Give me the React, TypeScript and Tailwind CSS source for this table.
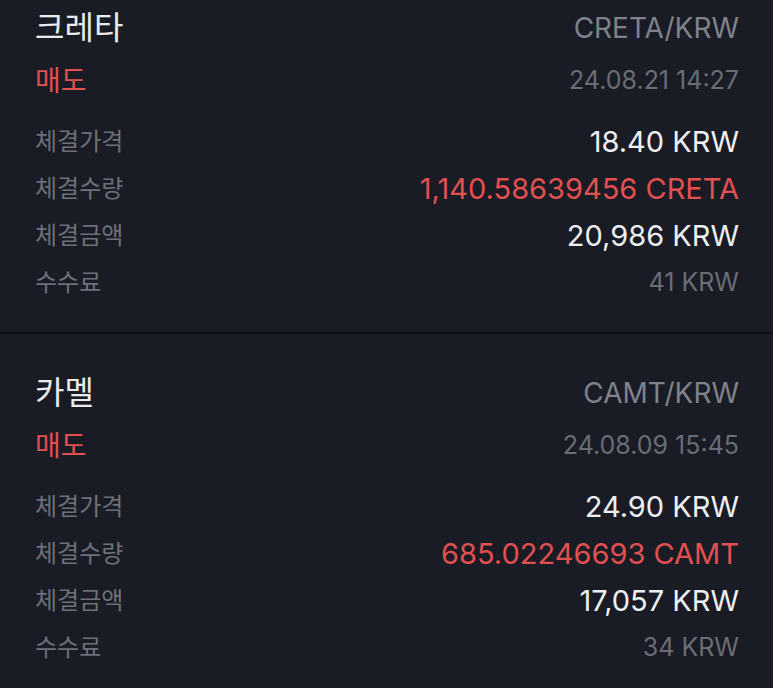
const FONT = "font-['Inter','Noto_Sans_CJK_KR',sans-serif]";

type Trade = {
  name: string;
  pair: string;
  side: string;
  time: string;
  price: string;
  qty: string;
  amount: string;
  fee: string;
};

const TRADES: Trade[] = [
  {
    name: "크레타",
    pair: "CRETA/KRW",
    side: "매도",
    time: "24.08.21 14:27",
    price: "18.40 KRW",
    qty: "1,140.58639456 CRETA",
    amount: "20,986 KRW",
    fee: "41 KRW",
  },
  {
    name: "카멜",
    pair: "CAMT/KRW",
    side: "매도",
    time: "24.08.09 15:45",
    price: "24.90 KRW",
    qty: "685.02246693 CAMT",
    amount: "17,057 KRW",
    fee: "34 KRW",
  },
];

function Row({ label, value, valueCls }: { label: string; value: string; valueCls: string }) {
  return (
    <div className="flex h-[47px] items-center justify-between">
      <span className="text-[24px] text-[#6d7079]">{label}</span>
      <span className={valueCls}>{value}</span>
    </div>
  );
}

function TradeCard({ t, first }: { t: Trade; first?: boolean }) {
  return (
    <section className={`bg-[#191c25] pl-[35px] pr-[34px] ${first ? "pt-[8px] pb-[26px]" : "pt-[39px] pb-[40px]"}`}>
      <div className="flex h-[40px] items-center justify-between">
        <span className="text-[32px] text-[#e9eaec]">{t.name}</span>
        <span className="text-[28px] text-[#7f828a]">{t.pair}</span>
      </div>
      <div className="mt-[15px] flex h-[36px] items-center justify-between">
        <span className="text-[28px] text-[#e2504f]">{t.side}</span>
        <span className="text-[25px] text-[#6a6d75]">{t.time}</span>
      </div>
      <div className="mt-[19px]">
        <Row label="체결가격" value={t.price} valueCls="text-[29px] text-[#eeeff1]" />
        <Row label="체결수량" value={t.qty} valueCls="text-[29px] text-[#e2504f]" />
        <Row label="체결금액" value={t.amount} valueCls="text-[29px] text-[#eeeff1]" />
        <Row label="수수료" value={t.fee} valueCls="text-[25px] text-[#6a6d75]" />
      </div>
    </section>
  );
}

export default function App() {
  return (
    <div className={`h-[688px] w-[773px] overflow-hidden bg-[#191c25] ${FONT}`}>
      <TradeCard t={TRADES[0]} first />
      <div className="h-[2px] bg-[#0f1117]" />
      <TradeCard t={TRADES[1]} />
    </div>
  );
}
